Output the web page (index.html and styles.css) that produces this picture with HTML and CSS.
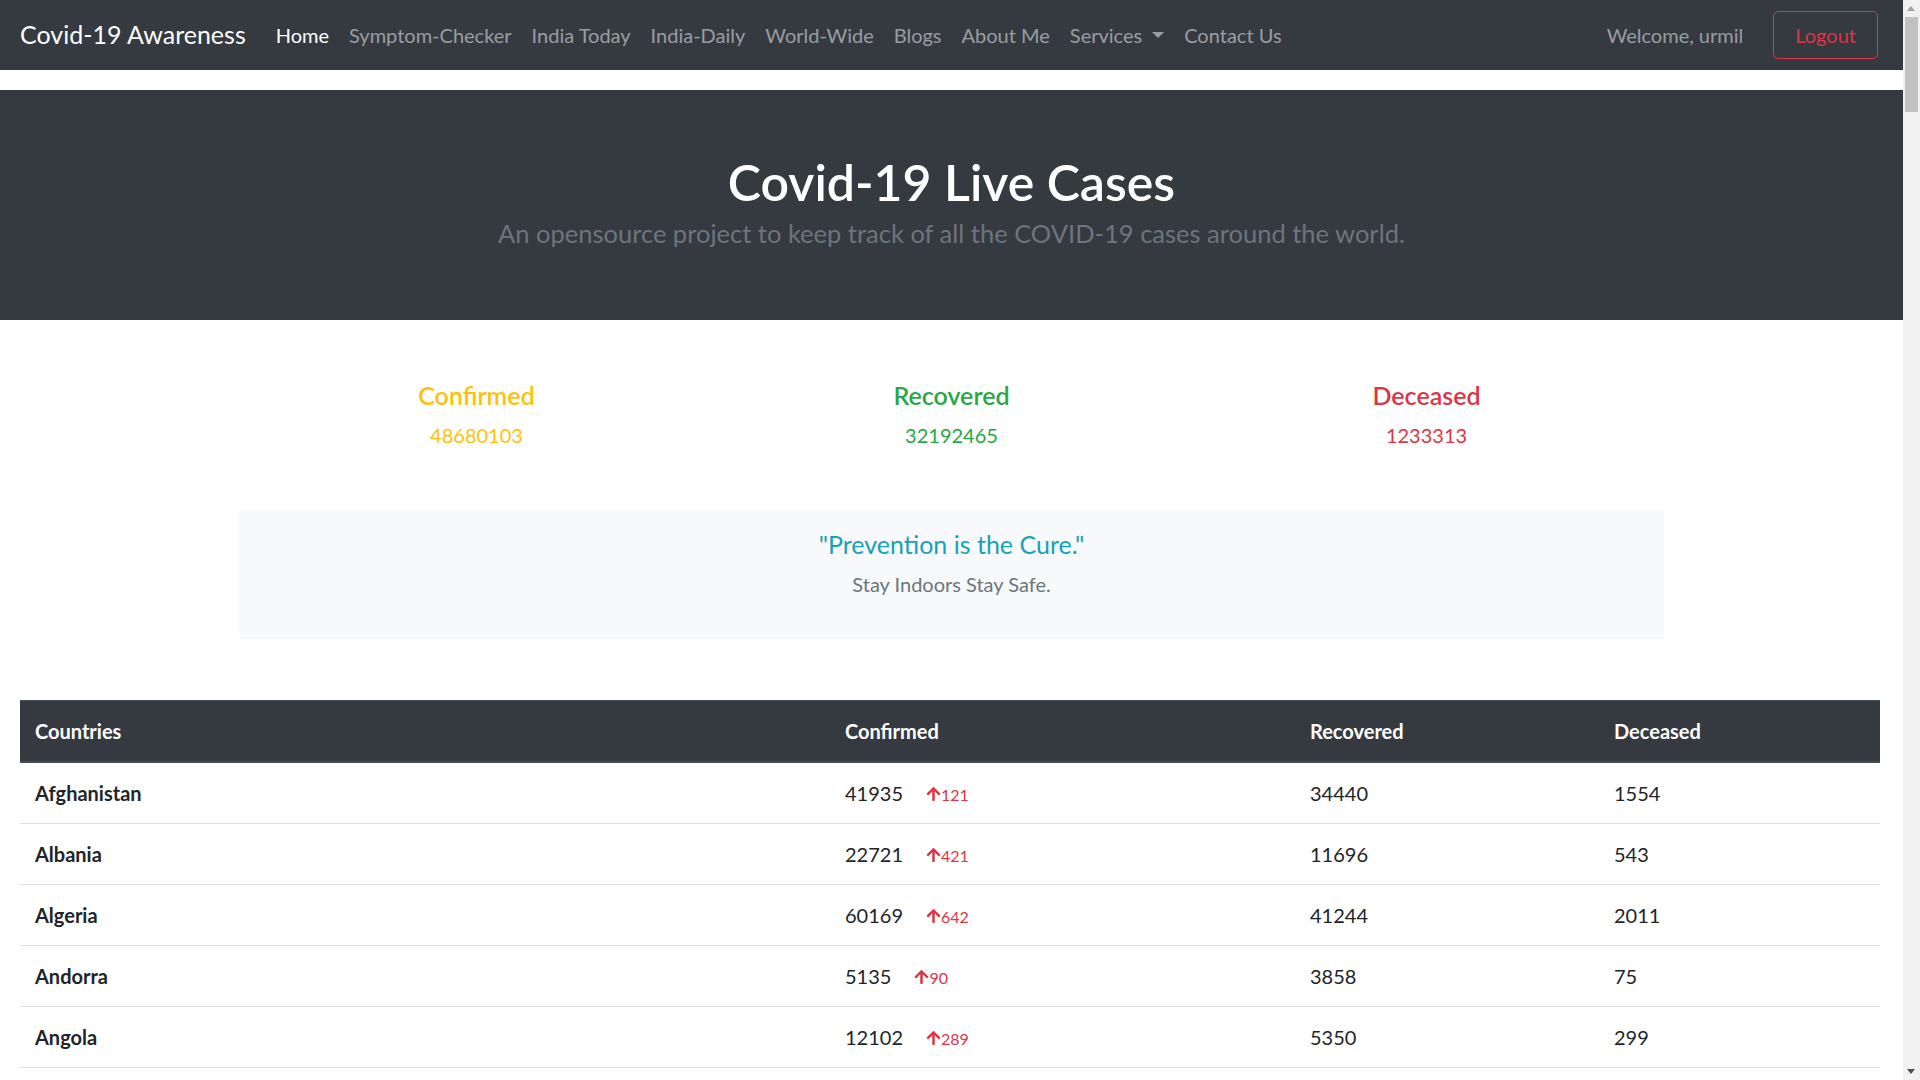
FILE: index.html
```html
<!DOCTYPE html>
<html lang="en">
<head>
<meta charset="utf-8">
<title>Covid-19 Awareness</title>
<link rel="stylesheet" href="styles.css">
</head>
<body>
<div class="page">
<nav class="navbar">
  <a class="brand" href="#">Covid-19 Awareness</a>
  <ul class="nav-links">
    <li><a class="nav-link active" href="#">Home</a></li>
    <li><a class="nav-link" href="#">Symptom-Checker</a></li>
    <li><a class="nav-link" href="#">India Today</a></li>
    <li><a class="nav-link" href="#">India-Daily</a></li>
    <li><a class="nav-link" href="#">World-Wide</a></li>
    <li><a class="nav-link" href="#">Blogs</a></li>
    <li><a class="nav-link" href="#">About Me</a></li>
    <li><a class="nav-link dropdown-toggle" href="#">Services</a></li>
    <li><a class="nav-link" href="#">Contact Us</a></li>
  </ul>
  <div class="nav-right">
    <span class="welcome">Welcome, urmil</span>
    <a class="btn-logout" href="#">Logout</a>
  </div>
</nav>

<section class="jumbotron">
  <h1 class="hero-title">Covid-19 Live Cases</h1>
  <p class="lead">An opensource project to keep track of all the COVID-19 cases around the world.</p>
</section>

<div class="container">
  <div class="stats">
    <div class="stat">
      <h5 class="stat-title text-warning">Confirmed</h5>
      <p class="stat-value text-warning">48680103</p>
    </div>
    <div class="stat">
      <h5 class="stat-title text-success">Recovered</h5>
      <p class="stat-value text-success">32192465</p>
    </div>
    <div class="stat">
      <h5 class="stat-title text-danger">Deceased</h5>
      <p class="stat-value text-danger">1233313</p>
    </div>
  </div>

  <div class="quote-box">
    <h5 class="quote">"Prevention is the Cure."</h5>
    <p class="quote-sub">Stay Indoors Stay Safe.</p>
  </div>
</div>

<div class="table-wrap">
  <table class="cases">
    <colgroup>
      <col class="c-country">
      <col class="c-confirmed">
      <col class="c-recovered">
      <col class="c-deceased">
    </colgroup>
    <thead>
      <tr><th>Countries</th><th>Confirmed</th><th>Recovered</th><th>Deceased</th></tr>
    </thead>
    <tbody>
      <tr><th>Afghanistan</th><td>41935<span class="delta"><svg class="arrow" viewBox="0 0 448 512"><path d="M34.9 289.5l-22.2-22.2c-9.4-9.4-9.4-24.6 0-33.9L207 39c9.4-9.4 24.6-9.4 33.9 0l194.3 194.3c9.4 9.4 9.4 24.6 0 33.9L413 289.4c-9.5 9.5-25 9.3-34.3-.4L264 168.6V456c0 13.3-10.7 24-24 24h-32c-13.3 0-24-10.7-24-24V168.6L69.2 289.1c-9.3 9.8-24.8 10-34.3.4z"/></svg>121</span></td><td>34440</td><td>1554</td></tr>
      <tr><th>Albania</th><td>22721<span class="delta"><svg class="arrow" viewBox="0 0 448 512"><path d="M34.9 289.5l-22.2-22.2c-9.4-9.4-9.4-24.6 0-33.9L207 39c9.4-9.4 24.6-9.4 33.9 0l194.3 194.3c9.4 9.4 9.4 24.6 0 33.9L413 289.4c-9.5 9.5-25 9.3-34.3-.4L264 168.6V456c0 13.3-10.7 24-24 24h-32c-13.3 0-24-10.7-24-24V168.6L69.2 289.1c-9.3 9.8-24.8 10-34.3.4z"/></svg>421</span></td><td>11696</td><td>543</td></tr>
      <tr><th>Algeria</th><td>60169<span class="delta"><svg class="arrow" viewBox="0 0 448 512"><path d="M34.9 289.5l-22.2-22.2c-9.4-9.4-9.4-24.6 0-33.9L207 39c9.4-9.4 24.6-9.4 33.9 0l194.3 194.3c9.4 9.4 9.4 24.6 0 33.9L413 289.4c-9.5 9.5-25 9.3-34.3-.4L264 168.6V456c0 13.3-10.7 24-24 24h-32c-13.3 0-24-10.7-24-24V168.6L69.2 289.1c-9.3 9.8-24.8 10-34.3.4z"/></svg>642</span></td><td>41244</td><td>2011</td></tr>
      <tr><th>Andorra</th><td>5135<span class="delta"><svg class="arrow" viewBox="0 0 448 512"><path d="M34.9 289.5l-22.2-22.2c-9.4-9.4-9.4-24.6 0-33.9L207 39c9.4-9.4 24.6-9.4 33.9 0l194.3 194.3c9.4 9.4 9.4 24.6 0 33.9L413 289.4c-9.5 9.5-25 9.3-34.3-.4L264 168.6V456c0 13.3-10.7 24-24 24h-32c-13.3 0-24-10.7-24-24V168.6L69.2 289.1c-9.3 9.8-24.8 10-34.3.4z"/></svg>90</span></td><td>3858</td><td>75</td></tr>
      <tr><th>Angola</th><td>12102<span class="delta"><svg class="arrow" viewBox="0 0 448 512"><path d="M34.9 289.5l-22.2-22.2c-9.4-9.4-9.4-24.6 0-33.9L207 39c9.4-9.4 24.6-9.4 33.9 0l194.3 194.3c9.4 9.4 9.4 24.6 0 33.9L413 289.4c-9.5 9.5-25 9.3-34.3-.4L264 168.6V456c0 13.3-10.7 24-24 24h-32c-13.3 0-24-10.7-24-24V168.6L69.2 289.1c-9.3 9.8-24.8 10-34.3.4z"/></svg>289</span></td><td>5350</td><td>299</td></tr>
    </tbody>
  </table>
</div>
</div>

<div class="scrollbar" aria-hidden="true">
  <span class="sb-arrow sb-up"></span>
  <span class="sb-thumb"></span>
  <span class="sb-arrow sb-down"></span>
</div>
</body>
</html>
```
FILE: styles.css
```css
*, *::before, *::after { box-sizing: border-box; }
body {
  margin: 0;
  font-family: "Lato", "Open Sans", sans-serif;
  font-size: 20px;
  line-height: 1.5;
  color: #212529;
  background: #fff;
}
a { text-decoration: none; }
.page { width: 1903px; }

/* Navbar */
.navbar {
  display: flex;
  align-items: center;
  height: 70px;
  padding: 10px 25px 10px 20px;
  background: #343a40;
}
.brand {
  font-size: 25px;
  line-height: 37.5px;
  padding: 6.25px 0;
  margin-right: 20px;
  color: #fff;
}
.nav-links {
  display: flex;
  list-style: none;
  margin: 0;
  padding: 0;
}
.nav-link {
  display: block;
  padding: 10px;
  line-height: 30px;
  color: rgba(255, 255, 255, 0.5);
}
.nav-link.active { color: #fff; }
.dropdown-toggle::after {
  content: "";
  display: inline-block;
  margin-left: 10px;
  vertical-align: 5px;
  border-top: 6px solid;
  border-right: 6px solid transparent;
  border-left: 6px solid transparent;
  border-bottom: 0;
}
.nav-right {
  margin-left: auto;
  display: flex;
  align-items: center;
  gap: 30px;
}
.welcome { color: rgba(255, 255, 255, 0.5); line-height: 30px; }
.btn-logout {
  display: inline-block;
  height: 48px;
  padding: 8px 21px;
  line-height: 30px;
  border: 1px solid #dc3545;
  border-radius: 5px;
  color: #dc3545;
}

/* Jumbotron */
.jumbotron {
  margin-top: 20px;
  background: #343a40;
  padding: 62px 20px 48px;
  text-align: center;
  height: 230px;
}
.hero-title {
  margin: 0 0 3px;
  font-size: 50px;
  line-height: 60px;
  font-weight: 600;
  color: #fff;
}
.lead {
  margin: 0 0 20px;
  font-size: 25.5px;
  line-height: 37.5px;
  font-weight: 400;
  color: #6c757d;
}

/* Container */
.container {
  width: 1425px;
  margin: 0 auto;
  padding-top: 60px;
}
.stats {
  display: grid;
  grid-template-columns: repeat(3, 1fr);
  text-align: center;
}
.stat-title {
  margin: 0 0 10px;
  font-size: 25px;
  line-height: 30px;
  font-weight: 600;
}
.stat-value { margin: 0 0 20px; }
.text-warning { color: #ffc107; }
.text-success { color: #28a745; }
.text-danger { color: #dc3545; }

.quote-box {
  margin-top: 39px;
  background: #f8f9fa;
  padding: 20px;
  text-align: center;
}
.quote {
  margin: 0 0 10px;
  font-size: 25px;
  line-height: 30px;
  font-weight: 400;
  color: #17a2b8;
}
.quote-sub { margin: 0 0 20px; color: #6c757d; }

/* Table */
.table-wrap { padding: 61px 23px 0 20px; }
.cases {
  width: 100%;
  border-collapse: collapse;
  table-layout: fixed;
}
.c-country { width: 810px; }
.c-confirmed { width: 465px; }
.c-recovered { width: 304px; }
.cases th, .cases td {
  padding: 15px;
  text-align: left;
  vertical-align: top;
  line-height: 30px;
  border-top: 1px solid #dee2e6;
  white-space: nowrap;
}
.cases tbody tr:last-child th,
.cases tbody tr:last-child td { border-bottom: 1px solid #dee2e6; }
.cases thead th {
  background: #343a40;
  color: #fff;
  font-weight: 700;
  border-top: 1px solid #454d55;
  border-bottom: 2px solid #454d55;
}
.cases tbody th { font-weight: 700; }
.delta {
  margin-left: 23px;
  font-size: 16px;
  line-height: 1;
  color: #dc3545;
}
.arrow {
  width: 15px;
  height: 16px;
  fill: #dc3545;
  vertical-align: -1px;
}

/* Imitation of the browser's vertical scrollbar */
.scrollbar {
  position: fixed;
  top: 0;
  right: 0;
  width: 17px;
  height: 100vh;
  background: #f1f1f1;
}
.sb-arrow {
  position: absolute;
  left: 4px;
  width: 0;
  height: 0;
  border-left: 4.5px solid transparent;
  border-right: 4.5px solid transparent;
}
.sb-up { top: 6px; border-bottom: 5px solid #a3a3a3; }
.sb-down { bottom: 6px; border-top: 5px solid #505050; }
.sb-thumb {
  position: absolute;
  top: 17px;
  left: 2px;
  width: 13px;
  height: 95px;
  background: #c1c1c1;
}
```
